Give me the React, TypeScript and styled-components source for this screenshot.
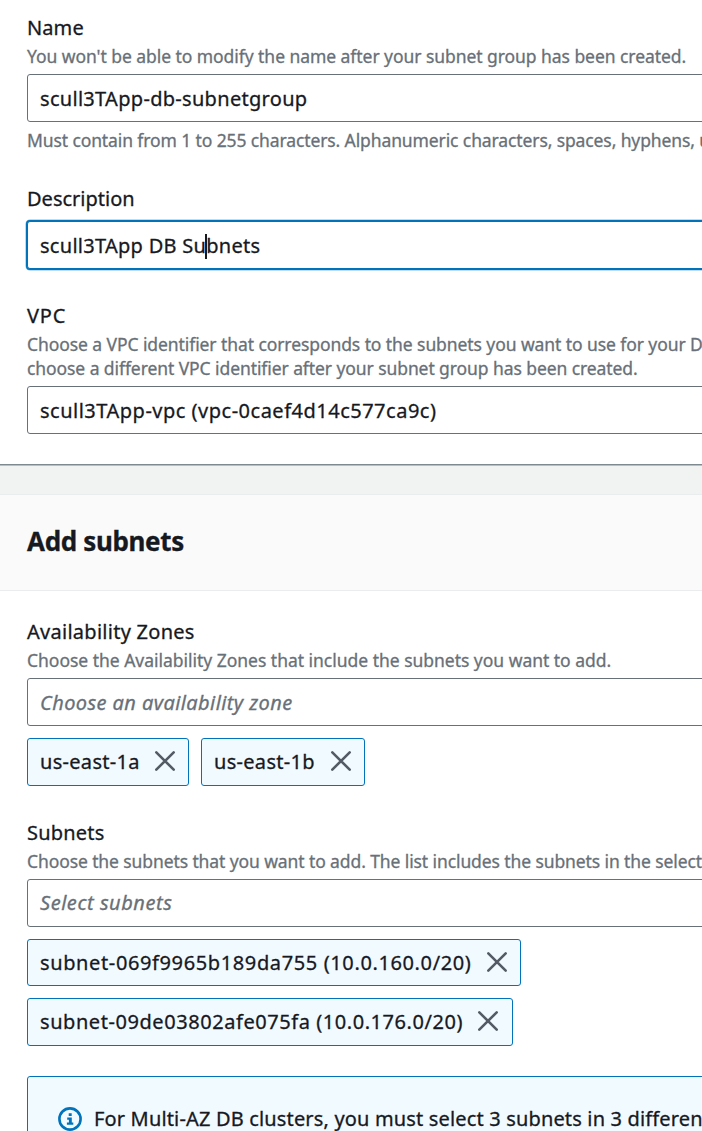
import React from "react";
import styled, { createGlobalStyle, css } from "styled-components";

const GlobalStyle = createGlobalStyle`
  *, *::before, *::after { box-sizing: border-box; }
  html, body { margin: 0; padding: 0; overflow: hidden; }
  body {
    background: #f1f3f3;
    color: #16191f;
    font-family: "Noto Sans", "Open Sans", sans-serif;
    font-size: 20px;
    line-height: 24px;
    -webkit-text-stroke: 0.3px currentColor;
  }
`;

const Page = styled.main`
  width: 100vw;
  height: 1131px;
  overflow: hidden;
`;

const Content = styled.div`
  display: flex;
  flex-direction: column;
  gap: 28px;
  width: 900px;
`;

const Panel = styled.section`
  background: #fff;
`;

const DetailsPanel = styled(Panel)`
  height: 466px;
  padding: 15px 0 0 27px;
  border-bottom: 1px solid #b7bfc0;
  box-shadow: inset 0 -1px 0 #7d8a90;
`;

const PanelHeader = styled.header`
  display: flex;
  align-items: center;
  height: 97px;
  padding: 0 27px 3px;
  background: #fafafa;
  border-top: 1px solid #eaeded;
  border-bottom: 1px solid #eaeded;
`;

const Title = styled.h2`
  margin: 0;
  font-size: 26px;
  line-height: 32px;
  font-weight: 700;
  letter-spacing: -0.35px;
`;

const PanelBody = styled.div`
  display: flex;
  flex-direction: column;
  padding: 28px 0 0 27px;
`;

const Field = styled.div<{ $after?: number }>`
  display: flex;
  flex-direction: column;
  margin-bottom: ${(p) => p.$after ?? 0}px;
`;

const Label = styled.label<{ $track?: number; $gap?: number }>`
  height: 24px;
  line-height: 26px;
  margin-bottom: ${(p) => p.$gap ?? 5}px;
  letter-spacing: ${(p) => p.$track ?? 0.27}px;
  white-space: nowrap;
`;

const Hint = styled.div<{ $track?: number }>`
  height: 24px;
  font-size: 17.5px;
  color: #687078;
  letter-spacing: ${(p) => p.$track ?? 0}px;
  white-space: nowrap;
`;

const Control = styled.div<{ $track: number; $placeholder?: boolean; $focused?: boolean; $drop?: number }>`
  display: flex;
  align-items: center;
  height: 48px;
  margin: 6px 0;
  padding: ${(p) => p.$drop ?? 2}px 12px 0;
  border: 1px solid #687078;
  border-radius: 3px;
  background: #fff;
  letter-spacing: ${(p) => p.$track}px;
  white-space: pre;
  ${(p) => p.$placeholder && css`
    color: #687078;
    font-style: italic;
  `}
  ${(p) => p.$focused && css`
    border-color: #0073bb;
    box-shadow: 0 0 0 1px #0073bb, 0 0 0 1.5px #7fb9dd;
  `}
`;

const Caret = styled.span`
  width: 2px;
  height: 25px;
  margin: 0 -1px;
  background: #16191f;
  z-index: 1;
`;

const Tokens = styled.div<{ $stacked?: boolean }>`
  display: flex;
  flex-direction: ${(p) => (p.$stacked ? "column" : "row")};
  align-items: flex-start;
  gap: 12px;
  margin-top: 6px;
`;

const Token = styled.div<{ $w: number; $h?: number; $track: number; $end?: number }>`
  display: flex;
  align-items: center;
  justify-content: space-between;
  width: ${(p) => p.$w}px;
  height: ${(p) => p.$h ?? 48}px;
  padding: 0 ${(p) => p.$end ?? 12}px 0 12px;
  border: 1px solid #0073bb;
  border-radius: 3px;
  background: #f1faff;
  letter-spacing: ${(p) => p.$track}px;
  white-space: nowrap;
`;

const Dismiss = styled.svg`
  display: block;
  flex: none;
  width: 22px;
  height: 22px;
  margin-bottom: 2px;
`;

const Alert = styled.div`
  display: flex;
  align-items: flex-start;
  height: 90px;
  margin-top: 30px;
  padding: 30px 30px 0;
  border: 1px solid #0073bb;
  border-radius: 3px;
  background: #f1faff;
  letter-spacing: 0.16px;
  white-space: nowrap;
`;

const InfoIcon = styled.svg`
  display: block;
  flex: none;
  width: 24px;
  height: 24px;
  margin-right: 12px;
`;

const CloseIcon = () => (
  <Dismiss viewBox="0 0 22 22" fill="none" stroke="#545b64" strokeWidth="2.6" strokeLinecap="round">
    <path d="M2.3 2.3 19.7 19.7M19.7 2.3 2.3 19.7" />
  </Dismiss>
);

export default function App() {
  return (
    <Page>
      <GlobalStyle />
      <Content>
        <DetailsPanel>
          <Field $after={34}>
            <Label $track={0.1}>Name</Label>
            <Hint $track={-0.055}>You won't be able to modify the name after your subnet group has been created.</Hint>
            <Control $track={0.3}>scull3TApp-db-subnetgroup</Control>
            <Hint $track={-0.11}>
              Must contain from 1 to 255 characters. Alphanumeric characters, spaces, hyphens, underscores, and periods
            </Hint>
          </Field>
          <Field $after={28}>
            <Label $track={0} $gap={5}>Description</Label>
            <Control $track={0.28} $focused>
              scull3TApp DB Su<Caret />bnets
            </Control>
          </Field>
          <Field>
            <Label $track={0.8}>VPC</Label>
            <Hint $track={-0.08}>
              Choose a VPC identifier that corresponds to the subnets you want to use for your DB subnet group.
            </Hint>
            <Hint $track={-0.08}>choose a different VPC identifier after your subnet group has been created.</Hint>
            <Control $track={0.5}>scull3TApp-vpc (vpc-0caef4d14c577ca9c)</Control>
          </Field>
        </DetailsPanel>

        <Panel>
          <PanelHeader>
            <Title>Add subnets</Title>
          </PanelHeader>
          <PanelBody>
            <Field $after={34}>
              <Label>Availability Zones</Label>
              <Hint $track={-0.02}>Choose the Availability Zones that include the subnets you want to add.</Hint>
              <Control $track={0.41} $placeholder>Choose an availability zone</Control>
              <Tokens>
                <Token $w={162} $track={0.3}>us-east-1a<CloseIcon /></Token>
                <Token $w={164} $track={0.3}>us-east-1b<CloseIcon /></Token>
              </Tokens>
            </Field>
            <Field>
              <Label $track={0.2}>Subnets</Label>
              <Hint $track={-0.1}>
                Choose the subnets that you want to add. The list includes the subnets in the selected Availability Zones.
              </Hint>
              <Control $track={0.54} $placeholder $drop={0}>Select subnets</Control>
              <Tokens $stacked>
                <Token $w={494} $h={47} $track={0.62}>subnet-069f9965b189da755 (10.0.160.0/20)<CloseIcon /></Token>
                <Token $w={486} $track={0.56} $end={13}>subnet-09de03802afe075fa (10.0.176.0/20)<CloseIcon /></Token>
              </Tokens>
            </Field>
            <Alert>
              <InfoIcon viewBox="0 0 24 24" fill="none">
                <circle cx="12" cy="12" r="10.6" stroke="#0073bb" strokeWidth="2.6" />
                <path d="M10.7 6.2h3v2.7h-3zM9.2 10.6h4.6v5h1.5v2.2H8.9v-2.2h2v-2.8H9.2z" fill="#0073bb" />
              </InfoIcon>
              <span>For Multi-AZ DB clusters, you must select 3 subnets in 3 different Availability Zones.</span>
            </Alert>
          </PanelBody>
        </Panel>
      </Content>
    </Page>
  );
}
